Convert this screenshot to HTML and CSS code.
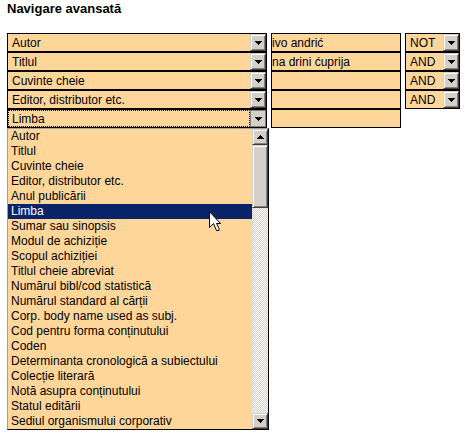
FILE: index.html
```html
<!DOCTYPE html>
<html lang="ro">
<head>
<meta charset="utf-8">
<title>Navigare avansată</title>
<link rel="stylesheet" href="styles.css">
</head>
<body>
<svg class="symbols" aria-hidden="true">
  <symbol id="down" viewBox="0 0 7 4"><path d="M0 0h7v1H6v1H5v1H4v1H3V3H2V2H1V1H0z"/></symbol>
  <symbol id="up" viewBox="0 0 7 4"><path d="M0 4h7V3H6V2H5V1H4V0H3v1H2v1H1v1H0z"/></symbol>
</svg>
<main>
  <h1>Navigare avansată</h1>
  <form class="search">
    <div class="combo">
      <select aria-label="Câmp 1"><option>Autor</option></select>
      <span class="arrow"><svg><use href="#down"/></svg></span>
    </div>
    <input type="text" aria-label="Termen 1" value="ivo andrić">
    <div class="combo">
      <select aria-label="Operator 1"><option>NOT</option></select>
      <span class="arrow"><svg><use href="#down"/></svg></span>
    </div>

    <div class="combo">
      <select aria-label="Câmp 2"><option>Titlul</option></select>
      <span class="arrow"><svg><use href="#down"/></svg></span>
    </div>
    <input type="text" aria-label="Termen 2" value="na drini ćuprija">
    <div class="combo">
      <select aria-label="Operator 2"><option>AND</option></select>
      <span class="arrow"><svg><use href="#down"/></svg></span>
    </div>

    <div class="combo">
      <select aria-label="Câmp 3"><option>Cuvinte cheie</option></select>
      <span class="arrow"><svg><use href="#down"/></svg></span>
    </div>
    <input type="text" aria-label="Termen 3">
    <div class="combo">
      <select aria-label="Operator 3"><option>AND</option></select>
      <span class="arrow"><svg><use href="#down"/></svg></span>
    </div>

    <div class="combo">
      <select aria-label="Câmp 4"><option>Editor, distributor etc.</option></select>
      <span class="arrow"><svg><use href="#down"/></svg></span>
    </div>
    <input type="text" aria-label="Termen 4">
    <div class="combo">
      <select aria-label="Operator 4"><option>AND</option></select>
      <span class="arrow"><svg><use href="#down"/></svg></span>
    </div>

    <div class="combo open">
      <select aria-label="Câmp 5"><option>Limba</option></select>
      <span class="arrow"><svg><use href="#down"/></svg></span>
      <div class="popup">
        <select class="list" size="20" aria-label="Opțiuni câmp 5">
          <option>Autor</option>
          <option>Titlul</option>
          <option>Cuvinte cheie</option>
          <option>Editor, distributor etc.</option>
          <option>Anul publicării</option>
          <option selected>Limba</option>
          <option>Sumar sau sinopsis</option>
          <option>Modul de achiziție</option>
          <option>Scopul achiziției</option>
          <option>Titlul cheie abreviat</option>
          <option>Numărul bibl/cod statistică</option>
          <option>Numărul standard al cărții</option>
          <option>Corp. body name used as subj.</option>
          <option>Cod pentru forma conținutului</option>
          <option>Coden</option>
          <option>Determinanta cronologică a subiectului</option>
          <option>Colecție literară</option>
          <option>Notă asupra conținutului</option>
          <option>Statul editării</option>
          <option>Sediul organismului corporativ</option>
        </select>
        <div class="scrollbar">
          <button type="button" class="step" aria-label="Sus"><svg><use href="#up"/></svg></button>
          <div class="track"><div class="thumb"></div></div>
          <button type="button" class="step" aria-label="Jos"><svg><use href="#down"/></svg></button>
        </div>
        <svg class="pointer" viewBox="0 0 12 21" aria-hidden="true"><path d="M.5.5v16l4-4 3 7h2.500v-2l-2.500-5h4z"/></svg>
      </div>
    </div>
    <input type="text" aria-label="Termen 5">
  </form>
</main>
</body>
</html>
```
FILE: styles.css
```css
* {
  box-sizing: border-box;
}

body {
  min-height: 100vh;
  margin: 0;
  padding: 0 8px 4px 7px;
  background: #fff;
  color: #000;
  font: 12px/15px "Liberation Sans", Arial, sans-serif;
}

.symbols {
  display: none;
}

h1 {
  margin: 0;
  padding: 1px 0 17px;
  font-size: 13px;
  line-height: 15px;
}

.search {
  display: grid;
  grid-template-columns: 2fr 1fr 55px;
  grid-auto-rows: 19px;
  column-gap: 4px;
}

.combo {
  position: relative;
  display: flex;
  min-width: 0;
  border: 1px solid #000;
  background: #ffd699;
}

select,
input {
  min-width: 0;
  margin: 0;
  border: 0;
  border-radius: 0;
  outline: 0;
  appearance: none;
  background: #ffd699;
  color: #000;
  font: inherit;
}

.combo > select {
  flex: 1;
  padding: 2px 0 0 4px;
}

input {
  width: 100%;
  padding: 2px 0 0;
  border: 1px solid #000;
}

.arrow,
.step,
.thumb {
  border: 1px solid;
  border-color: #d4d0c8 #404040 #404040 #d4d0c8;
  background: #d4d0c8;
  box-shadow: inset 1px 1px #fff, inset -1px -1px #808080;
}

.arrow,
.step {
  display: flex;
  flex: none;
  align-items: center;
  justify-content: center;
  width: 16px;
  padding: 0;
  pointer-events: none;
}

.arrow svg,
.step svg {
  width: 7px;
  height: 4px;
}

.open > select {
  border: 1px dotted #000;
  padding: 1px 0 0 3px;
}

.open > .arrow {
  border-color: #808080;
  box-shadow: none;
}

.popup {
  position: absolute;
  z-index: 1;
  top: calc(100% + 1px);
  left: -1px;
  right: -3px;
  display: flex;
  border: 1px solid #000;
  border-top-color: #a0a0a0;
  border-left-color: #a0a0a0;
  background: #ffd699;
}

.list {
  flex: 1;
  height: 300px;
  padding: 0;
  overflow: hidden;
}

.list option {
  height: 15px;
  min-height: 15px;
  padding: 0 3px;
  line-height: 15px;
}

.list option:checked {
  background: linear-gradient(#0a246a, #0a246a);
  color: #fff;
  -webkit-text-fill-color: #fff;
}

.scrollbar {
  display: flex;
  flex-direction: column;
  width: 16px;
}

.step {
  height: 16px;
}

.track {
  flex: 1;
  background: repeating-conic-gradient(#fff 0 25%, #d4d0c8 0 50%) 0 0 / 2px 2px;
}

.thumb {
  height: 63px;
}

.pointer {
  position: absolute;
  top: 82px;
  left: 201px;
  width: 12px;
  height: 21px;
  fill: #fff;
  stroke: #000;
}
```
